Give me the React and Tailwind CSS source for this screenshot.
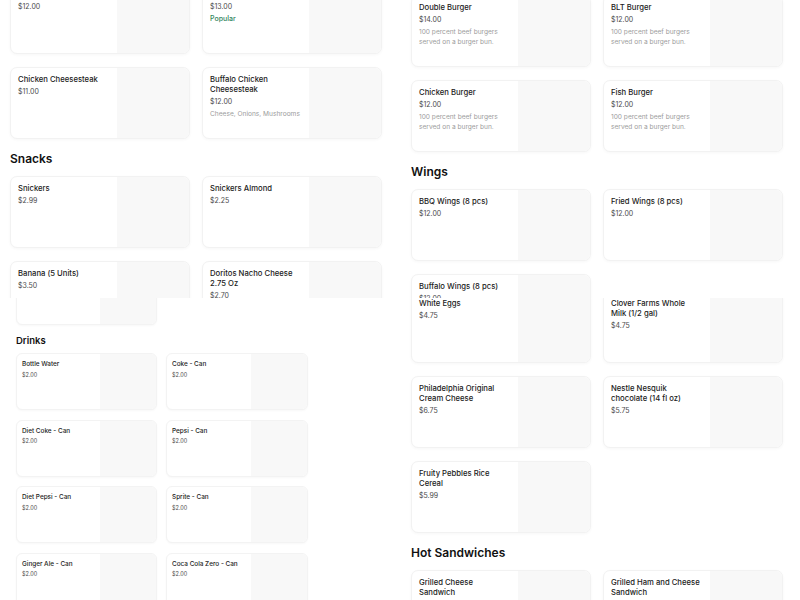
import React from "react";

const font = { fontFamily: "Inter, 'Noto Sans', sans-serif" };

function Card({ title, price, desc, popular }) {
  return (
    <div className="w-[180px] h-[72px] rounded-[7px] border border-[#f2f2f2] bg-white flex overflow-hidden shadow-[0_1px_3px_rgba(0,0,0,0.035)]">
      <div className="w-[106px] pl-[7px] pt-[7px]">
        <div className="w-[92px] text-[7.7px] leading-[10px] font-medium text-[#1b1b1b]">{title}</div>
        <div className="mt-[2px] text-[7px] leading-[10px] text-[#4a4a4a]">{price}</div>
        {desc && <div className="mt-[2px] w-[100px] text-[6.6px] leading-[10px] text-[#9c9c9c]">{desc}</div>}
        {popular && <div className="mt-[2px] text-[7px] leading-[10px] font-medium text-[#31855b]">Popular</div>}
      </div>
      <div className="flex-1 bg-[#f8f8f8]" />
    </div>
  );
}

function SmallCard({ title, price }) {
  return (
    <div className="h-[57px] rounded-[6px] border border-[#f3f3f3] bg-white flex overflow-hidden shadow-[0_1px_2px_rgba(0,0,0,0.03)]">
      <div className="flex-1 pl-[5px] pr-[5px] pt-[6px]">
        <div className="text-[6.4px] leading-[9px] font-medium text-[#1b1b1b]">{title}</div>
        <div className="mt-[1.5px] text-[5.5px] leading-[8px] text-[#4a4a4a]">{price}</div>
      </div>
      <div className="w-[56px] bg-[#f8f8f8]" />
    </div>
  );
}

function Grid({ children }) {
  return <div className="grid grid-cols-[180px_180px] gap-x-[12px] gap-y-[13px]">{children}</div>;
}

function Heading({ children }) {
  return <div className="mt-[12px] mb-[9px] h-[16px] text-[12px] leading-[16px] font-semibold text-[#111]">{children}</div>;
}

const burgerDesc = "100 percent beef burgers served on a burger bun.";

export default function App() {
  return (
    <div style={font} className="w-[800px] h-[600px] bg-white overflow-hidden grid grid-cols-[400px_400px] grid-rows-[298px_302px]">
      {/* top-left */}
      <div className="overflow-hidden">
        <div className="pl-[10px] mt-[-18px]">
          <Grid>
            <Card title="Philly Cheesesteak" price="$12.00" />
            <Card title="Philly Special" price="$13.00" popular />
            <Card title="Chicken Cheesesteak" price="$11.00" />
            <Card title="Buffalo Chicken Cheesesteak" price="$12.00" desc="Cheese, Onions, Mushrooms" />
          </Grid>
          <Heading>Snacks</Heading>
          <Grid>
            <Card title="Snickers" price="$2.99" />
            <Card title="Snickers Almond" price="$2.25" />
            <Card title="Banana (5 Units)" price="$3.50" />
            <Card title="Doritos Nacho Cheese 2.75 Oz" price="$2.70" />
          </Grid>
        </div>
      </div>

      {/* top-right */}
      <div className="overflow-hidden">
        <div className="pl-[11px] mt-[-5px]">
          <Grid>
            <Card title="Double Burger" price="$14.00" desc={burgerDesc} />
            <Card title="BLT Burger" price="$12.00" desc={burgerDesc} />
            <Card title="Chicken Burger" price="$12.00" desc={burgerDesc} />
            <Card title="Fish Burger" price="$12.00" desc={burgerDesc} />
          </Grid>
          <Heading>Wings</Heading>
          <Grid>
            <Card title="BBQ Wings (8 pcs)" price="$12.00" />
            <Card title="Fried Wings (8 pcs)" price="$12.00" />
            <Card title="Buffalo Wings (8 pcs)" price="$12.00" />
          </Grid>
        </div>
      </div>

      {/* bottom-left */}
      <div className="overflow-hidden">
        <div className="pl-[16px] mt-[-30px]">
          <div className="grid grid-cols-[141px_142px] gap-x-[9px]">
            <SmallCard title="Water" price="$2.00" />
          </div>
          <div className="mt-[10px] mb-[6px] h-[12px] text-[9.5px] leading-[12px] font-semibold text-[#111]">Drinks</div>
          <div className="grid grid-cols-[141px_142px] gap-x-[9px] gap-y-[9.67px]">
            <SmallCard title="Bottle Water" price="$2.00" />
            <SmallCard title="Coke - Can" price="$2.00" />
            <SmallCard title="Diet Coke - Can" price="$2.00" />
            <SmallCard title="Pepsi - Can" price="$2.00" />
            <SmallCard title="Diet Pepsi - Can" price="$2.00" />
            <SmallCard title="Sprite - Can" price="$2.00" />
            <SmallCard title="Ginger Ale - Can" price="$2.00" />
            <SmallCard title="Coca Cola Zero - Can" price="$2.00" />
          </div>
        </div>
      </div>

      {/* bottom-right */}
      <div className="overflow-hidden">
        <div className="pl-[11px] mt-[-7px]">
          <Grid>
            <Card title="White Eggs" price="$4.75" />
            <Card title={<>Clover Farms Whole<br />Milk (1/2 gal)</>} price="$4.75" />
            <Card title="Philadelphia Original Cream Cheese" price="$6.75" />
            <Card title="Nestle Nesquik chocolate (14 fl oz)" price="$5.75" />
            <Card title="Fruity Pebbles Rice Cereal" price="$5.99" />
          </Grid>
          <Heading>Hot Sandwiches</Heading>
          <Grid>
            <Card title="Grilled Cheese Sandwich" price="$8.00" />
            <Card title="Grilled Ham and Cheese Sandwich" price="$9.00" />
          </Grid>
        </div>
      </div>
    </div>
  );
}
